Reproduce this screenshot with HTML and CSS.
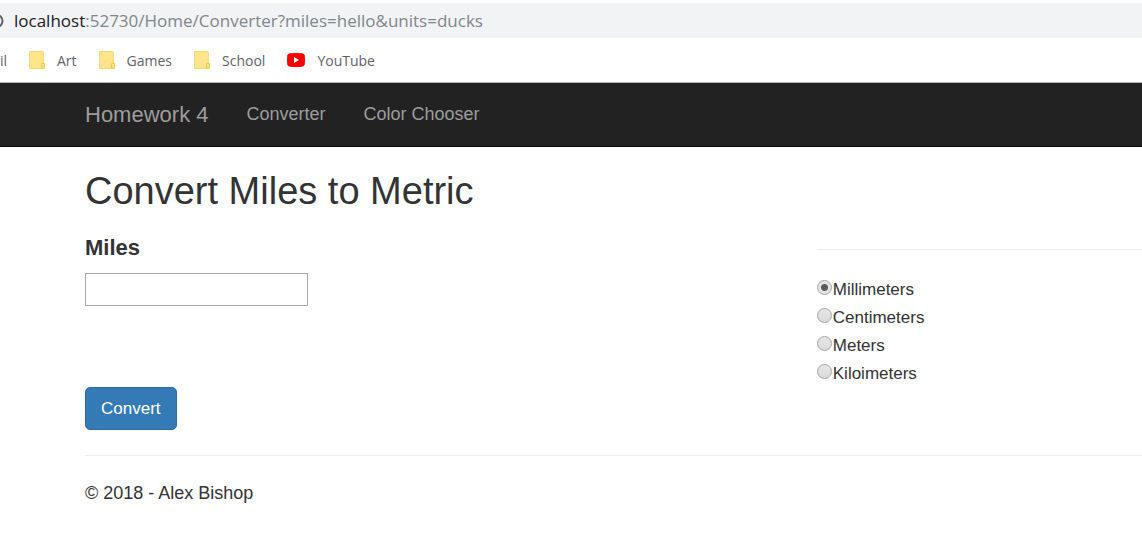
FILE: index.html
```html
<!DOCTYPE html>
<html lang="en">
<head>
<meta charset="utf-8">
<title>Convert Miles to Metric</title>
<link rel="stylesheet" href="styles.css">
</head>
<body>
<header class="browser">
  <div class="address-bar">
    <svg class="info" width="6" height="16" viewBox="0 0 6 16" aria-hidden="true"><circle cx="-4" cy="8" r="6.5" fill="none" stroke="#5f6368" stroke-width="2"/></svg>
    <span class="url"><span class="host">localhost</span>:52730/Home/Converter?miles=hello&amp;units=ducks</span>
  </div>
  <nav class="bookmarks" aria-label="Bookmarks">
    <a class="bookmark bookmark-cut" href="#">il</a>
    <a class="bookmark" href="#"><svg width="16" height="18" viewBox="0 0 16 18" aria-hidden="true"><path d="M1 .5h12.500q.8 0 .8.8v10.200l1.200 1v4.200q0 .8-.8.8H1q-.6 0-.6-.6V1.100q0-.6.6-.6z" fill="#ffe48c" stroke="#f6d76a"/><path d="M12.500 17v-3.500q0-1.500 1.500-1.500t1.500 1.500V16.500q0 .8-.8.8z" fill="#ffe48c" stroke="#edc63e"/></svg><span>Art</span></a>
    <a class="bookmark" href="#"><svg width="16" height="18" viewBox="0 0 16 18" aria-hidden="true"><path d="M1 .5h12.500q.8 0 .8.8v10.200l1.200 1v4.200q0 .8-.8.8H1q-.6 0-.6-.6V1.100q0-.6.6-.6z" fill="#ffe48c" stroke="#f6d76a"/><path d="M12.500 17v-3.500q0-1.500 1.500-1.500t1.500 1.500V16.500q0 .8-.8.8z" fill="#ffe48c" stroke="#edc63e"/></svg><span>Games</span></a>
    <a class="bookmark" href="#"><svg width="16" height="18" viewBox="0 0 16 18" aria-hidden="true"><path d="M1 .5h12.500q.8 0 .8.8v10.200l1.200 1v4.200q0 .8-.8.8H1q-.6 0-.6-.6V1.100q0-.6.6-.6z" fill="#ffe48c" stroke="#f6d76a"/><path d="M12.500 17v-3.500q0-1.500 1.500-1.500t1.500 1.500V16.500q0 .8-.8.8z" fill="#ffe48c" stroke="#edc63e"/></svg><span>School</span></a>
    <a class="bookmark" href="#"><svg width="18" height="14" viewBox="0 0 18 14" aria-hidden="true"><path d="M3 .3Q9-.2 15 .3q2.300.2 2.700 2.200.5 4.500 0 9-.4 2-2.700 2.200-6 .5-12 0Q.7 13.500.3 11.500q-.5-4.500 0-9Q.7.500 3 .3z" fill="#f00"/><path d="M7 4l5 3-5 3z" fill="#fff"/></svg><span>YouTube</span></a>
  </nav>
</header>
<nav class="navbar" aria-label="Main">
  <a class="brand" href="#">Homework 4</a>
  <a class="nav-link" href="#">Converter</a>
  <a class="nav-link" href="#">Color Chooser</a>
</nav>
<main class="content">
  <h1 class="title">Convert Miles to Metric</h1>
  <form class="form">
    <div class="fields">
      <label class="miles-label" for="miles">Miles</label>
      <input class="miles-input" id="miles" name="miles" type="text">
      <button class="submit" type="button">Convert</button>
    </div>
    <div class="units" role="radiogroup" aria-label="Units">
      <hr class="rule">
      <div class="options">
        <label class="option"><input class="radio" type="radio" name="units" checked><span>Millimeters</span></label>
        <label class="option"><input class="radio" type="radio" name="units"><span>Centimeters</span></label>
        <label class="option"><input class="radio" type="radio" name="units"><span>Meters</span></label>
        <label class="option"><input class="radio" type="radio" name="units"><span>Kiloimeters</span></label>
      </div>
    </div>
  </form>
  <hr class="rule">
  <footer class="footer">© 2018 - Alex Bishop</footer>
</main>
</body>
</html>
```
FILE: styles.css
```css
* { box-sizing: border-box; }
body {
  margin: 0;
  background: #fff;
  color: #333;
  font: 17px/25px "Liberation Sans", Arial, sans-serif;
}
a { text-decoration: none; }
.browser {
  padding-top: 3px;
  border-bottom: 1px solid #b6b6b6;
  font-family: "Open Sans", "Noto Sans", sans-serif;
}
.address-bar {
  display: flex;
  align-items: center;
  gap: 8px;
  height: 35px;
  background: #f1f3f4;
}
.url { color: #80868b; font-size: 17px; white-space: nowrap; }
.host { color: #202124; }
.bookmarks {
  display: flex;
  align-items: center;
  gap: 22px;
  height: 44px;
}
.bookmark {
  display: flex;
  align-items: center;
  gap: 12px;
  color: #5f6368;
  font-size: 14px;
}
.bookmark-cut { width: 7px; justify-content: flex-end; }
.navbar {
  display: flex;
  align-items: center;
  gap: 38px;
  height: 64px;
  padding: 0 85px;
  background: #222;
  border-bottom: 1px solid #080808;
}
.brand, .nav-link { color: #9d9d9d; font-size: 18px; }
.brand { font-size: 22px; }
.content { padding-left: 85px; }
.title {
  margin: 0;
  padding: 24px 0 22px;
  font-size: 38px;
  font-weight: 400;
  line-height: 41px;
}
.form { display: grid; grid-template-columns: 9fr 4fr; }
.fields { display: flex; flex-direction: column; align-items: flex-start; }
.miles-label { font-size: 22px; font-weight: 700; line-height: 28px; }
.miles-input {
  width: 223px;
  height: 33px;
  margin: 11px 0 81px;
  padding: 2px 4px;
  border: 1px solid #a9a9a9;
  font: inherit;
}
.submit {
  padding: 8px 15px;
  border: 1px solid #2e6da4;
  border-radius: 5px;
  background: #337ab7;
  color: #fff;
  font: inherit;
}
.rule { margin: 0; border: 0; border-top: 1px solid #eee; }
.units { padding-top: 15px; }
.options { padding-top: 25px; }
.option { display: flex; align-items: center; height: 28px; }
.radio {
  appearance: none;
  width: 15px;
  height: 15px;
  margin: 0 1px 4px 0;
  border: 1px solid #a5a5a5;
  border-radius: 50%;
  background: linear-gradient(#e6e6e6, #dadada);
}
.radio:checked { background: radial-gradient(circle, #5b5b5b 3px, #e4e4e4 4px); }
.content > .rule { margin: 25px 0; }
.footer { padding-bottom: 25px; font-size: 18px; }
```
